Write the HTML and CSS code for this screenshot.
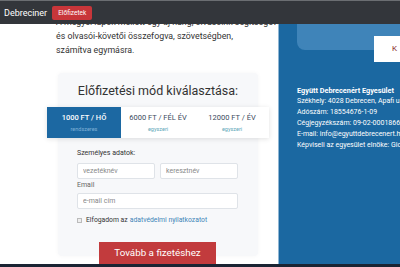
FILE: index.html
```html
<!DOCTYPE html>
<html lang="hu">
<head>
<meta charset="utf-8">
<link rel="stylesheet" href="styles.css">
</head>
<body>
<header class="nav">
  <span class="brand">Debreciner</span>
  <span class="badge">Előfizetek</span>
</header>
<main class="page">
  <section class="left">
    <p class="intro">A megyei lapok mellett egy új hang, olvasóink segítségével,<br>és olvasói-követői összefogva, szövetségben,<br>számítva egymásra.</p>
    <div class="card">
      <h2 class="card-title">Előfizetési mód kiválasztása:</h2>
      <div class="tabs">
        <div class="tab active"><span class="price">1000 FT / HŐ</span><span class="kind">rendszeres</span></div>
        <div class="tab"><span class="price">6000 FT / FÉL ÉV</span><span class="kind">egyszeri</span></div>
        <div class="tab"><span class="price">12000 FT / ÉV</span><span class="kind">egyszeri</span></div>
      </div>
      <form class="form">
        <div class="label">Személyes adatok:</div>
        <div class="row">
          <input class="input" placeholder="vezetéknév">
          <input class="input" placeholder="keresztnév">
        </div>
        <div class="label small">Email</div>
        <input class="input wide" placeholder="e-mail cím">
        <label class="check"><span class="box"></span>Elfogadom az <a class="link">adatvédelmi nyilatkozatot</a></label>
      </form>
    </div>
    <button class="submit">Tovább a fizetéshez</button>
  </section>
  <aside class="right">
    <div class="top-box"><span class="white-btn">K</span></div>
    <div class="info">
      <div class="info-title">Együtt Debrecenért Egyesület</div>
      <div>Székhely: 4028 Debrecen, Apafi u.</div>
      <div>Adószám: 18554676-1-09</div>
      <div>Cégjegyzékszám: 09-02-0001866</div>
      <div>E-mail: info@egyuttdebrecenert.hu</div>
      <div>Képviseli az egyesület elnöke: Gicz Ádám</div>
    </div>
  </aside>
</main>
<div class="bottom-line"></div>
</body>
</html>
```

FILE: styles.css
```css
* { box-sizing: border-box; }
html, body { margin: 0; padding: 0; }
body {
  width: 400px;
  height: 267px;
  overflow: hidden;
  font-family: Roboto, "Liberation Sans", sans-serif;
  background: #fff;
  color: #333;
}
.nav {
  position: fixed;
  top: 0; left: 0; right: 0;
  height: 24px;
  background: #33363b;
  border-top: 1px solid #6b6e72;
  display: flex;
  align-items: center;
  gap: 5px;
  padding-left: 4px;
  z-index: 5;
}
.brand { color: #fff; font-size: 9px; }
.badge {
  background: #c8363a;
  color: #fff;
  font-size: 6.5px;
  line-height: 14px;
  padding: 0 6px;
  border-radius: 2px;
}
.page {
  display: flex;
  height: 267px;
}
.left {
  flex: 0 0 278px;
  width: 278px;
  padding-left: 58px;
  padding-top: 15px;
  display: flex;
  flex-direction: column;
  align-items: flex-start;
}
.intro {
  margin: 0 0 0 -2px;
  white-space: nowrap;
  font-size: 8.8px;
  line-height: 14px;
  color: #333;
}
.card {
  margin-top: 16px;
  width: 200px;
  background: #f7f8fa;
  border-radius: 4px;
  box-shadow: 0 0 4px rgba(0,0,0,0.04);
  padding: 10px 0 32px;
}
.card-title {
  margin: 0;
  font-size: 12.5px;
  font-weight: 400;
  line-height: 16px;
  text-align: center;
  color: #333;
}
.tabs {
  margin: 8px -11px 0;
  display: grid;
  grid-template-columns: 1fr 1fr 1fr;
  height: 31px;
  background: #fff;
  box-shadow: 0 1px 5px rgba(0,0,0,0.12);
}
.tab {
  display: flex;
  flex-direction: column;
  align-items: center;
  justify-content: center;
  gap: 4px;
}
.tab .price { font-size: 7.5px; color: #3a4a5c; }
.tab .kind { font-size: 5.5px; color: #5ea7b8; }
.tab.active { background: #1c68a2; }
.tab.active .price { color: #fff; font-weight: 500; }
.tab.active .kind { color: #7fb0d6; }
.form {
  padding: 10px 20px 0 19px;
  display: flex;
  flex-direction: column;
}
.label { font-size: 7px; line-height: 10px; color: #333; }
.label.small { color: #666; margin-top: 1px; }
.row {
  display: flex;
  gap: 5px;
  margin-top: 5px;
}
.input {
  flex: 1;
  min-width: 0;
  height: 16px;
  border: 1px solid #dfe3e8;
  border-radius: 2px;
  background: #fff;
  font: inherit;
  font-size: 7px;
  padding: 0 5px;
  margin: 0;
}
.input::placeholder { color: #888; }
.input.wide { width: 100%; flex: none; margin-top: 3px; }
.check {
  margin-top: 7px;
  display: flex;
  align-items: center;
  gap: 4px;
  font-size: 6.8px;
  color: #333;
}
.box {
  width: 5px; height: 5px;
  border: 1px solid #bbb;
  background: #eee;
}
.link { color: #3e85b8; margin-left: -2px; }
.submit {
  margin: -14px 0 0 41px;
  width: 117px;
  height: 30px;
  border: 0;
  background: #c23b3d;
  color: #fff;
  font-family: inherit;
  font-size: 9.8px;
  padding: 0 0 5px;
  position: relative;
}
.right {
  flex: 1 1 auto;
  min-width: 0;
  overflow: hidden;
  background: #1b68a1;
  border-left: 1px solid #8fb6d4;
}
.top-box {
  margin-left: 18px;
  height: 50px;
  background: #3f84b9;
  border-bottom-left-radius: 8px;
  position: relative;
}
.white-btn {
  position: absolute;
  left: 77px;
  top: 36px;
  width: 40px;
  height: 26px;
  background: #fff;
  color: #8a2a2a;
  font-size: 8px;
  padding: 8px 0 0 18px;
}
.info {
  margin-top: 35px;
  padding-left: 18px;
  color: #fff;
  font-size: 7px;
  line-height: 11px;
}
.info > div { white-space: nowrap; }
.info-title { font-weight: 700; font-size: 7.3px; }
.bottom-line {
  position: fixed;
  left: 0; right: 0; bottom: 0;
  height: 3px;
  background: #1a2433;
  z-index: 6;
}
```
